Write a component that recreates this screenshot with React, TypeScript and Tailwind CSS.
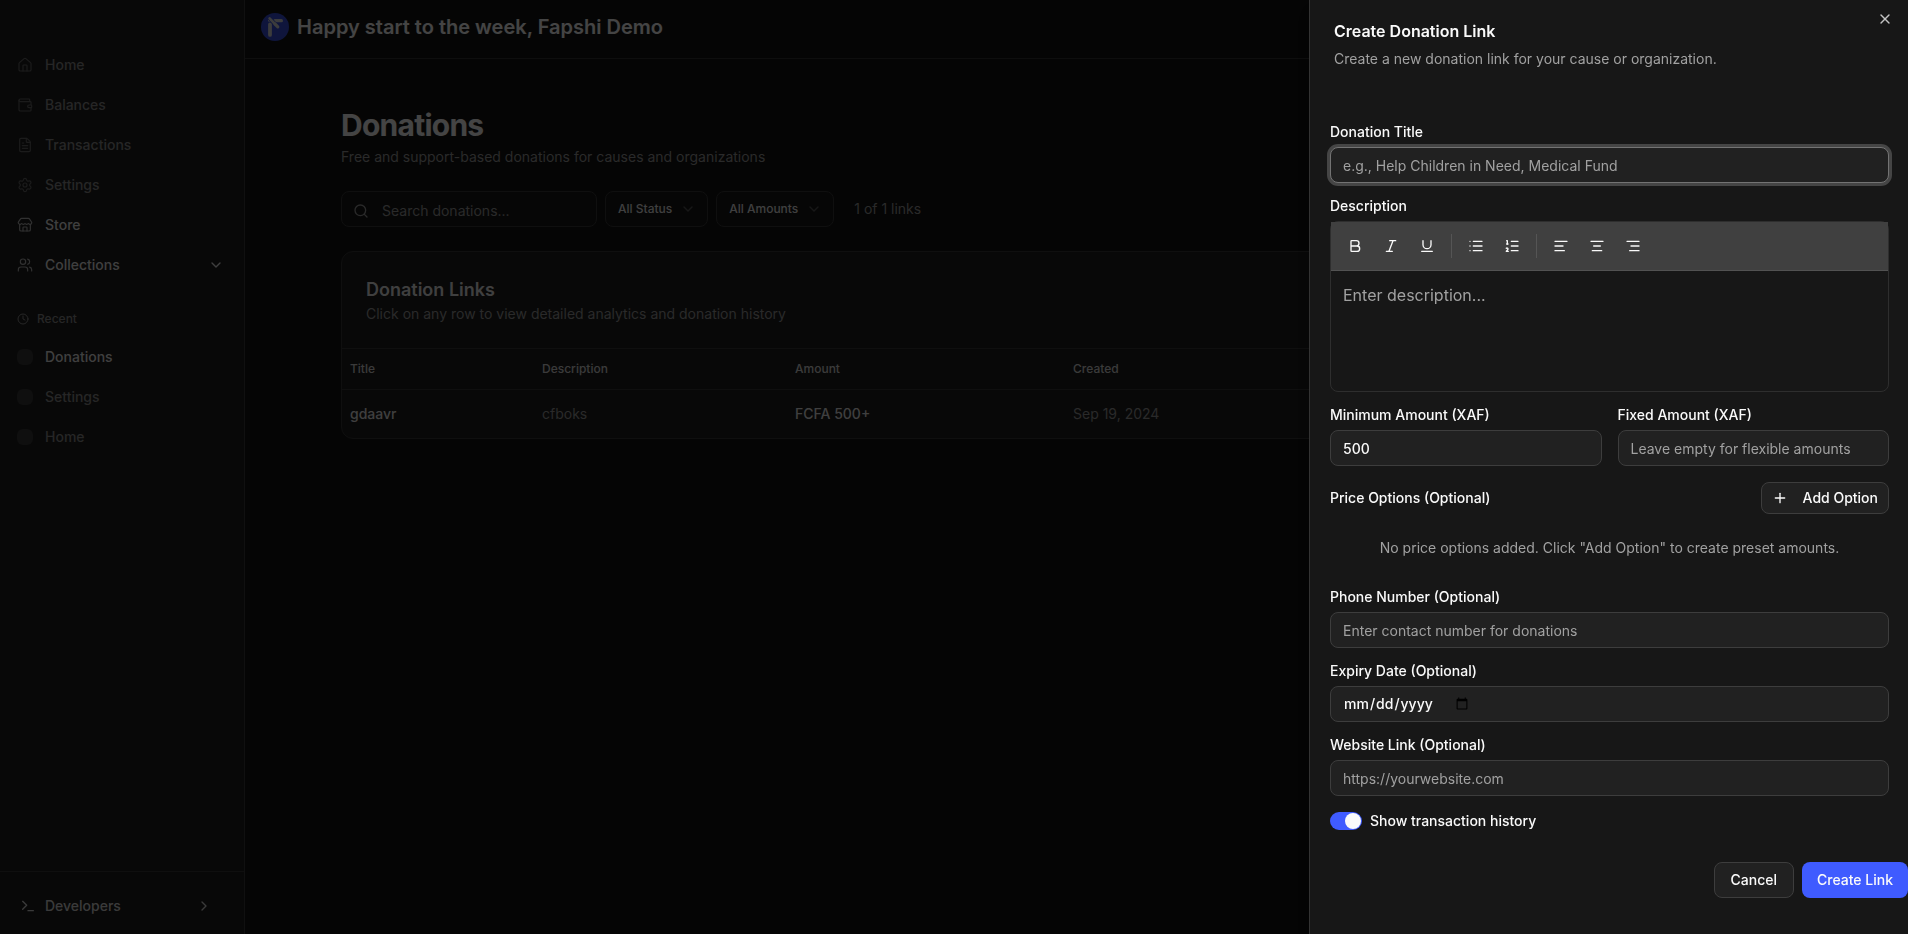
import React from "react";
import {
  AlignCenter, AlignLeft, AlignRight, Bold, ChevronDown, ChevronRight, Clock, FileText, House, Italic,
  List, ListOrdered, Plus, Search, Settings, Store, Terminal, Underline, Users, Wallet, X,
} from "lucide-react";
import type { LucideIcon } from "lucide-react";

type NavItem = { label: string; icon: LucideIcon; strong?: boolean; expandable?: boolean };

const nav: NavItem[] = [
  { label: "Home", icon: House },
  { label: "Balances", icon: Wallet },
  { label: "Transactions", icon: FileText },
  { label: "Settings", icon: Settings },
  { label: "Store", icon: Store, strong: true },
  { label: "Collections", icon: Users, strong: true, expandable: true },
];

const recent = [
  { label: "Donations", strong: true },
  { label: "Settings", strong: false },
  { label: "Home", strong: false },
];

function Logo() {
  return (
    <svg viewBox="0 0 28 28" className="size-7 shrink-0" aria-hidden="true">
      <circle cx="14" cy="14" r="14" fill="#3349c8" />
      <g fill="none" stroke="#c8c8c8" strokeLinecap="round">
        <path d="M9 11.4V21.9" strokeWidth="3.8" />
        <path d="M13.8 7.7H20.4" strokeWidth="3.2" />
        <path d="M8.2 5.2V7.6" strokeWidth="2.4" />
        <path d="M8.6 5.4L16.6 13.6" stroke="#3349c8" strokeWidth="4" />
        <path d="M8.6 5.4L14 11" strokeWidth="2.6" />
        <path d="M14 11L16.8 13.8" strokeWidth="3.2" />
      </g>
    </svg>
  );
}

function Sidebar() {
  return (
    <aside className="flex w-[245px] shrink-0 flex-col border-r border-[#383838] bg-[#1c1c1c] text-sm font-medium">
      <nav className="flex flex-1 flex-col px-2 pt-[45px]">
        {nav.map(({ label, icon: Icon, strong, expandable }) => (
          <a
            key={label}
            href="#"
            className={`flex h-10 items-center gap-3 pl-[9px] pr-3 ${strong ? "text-[#d4d4d4]" : "text-[#808080]"}`}
          >
            <Icon className={`size-4 ${strong ? "text-[#a3a3a3]" : "text-[#5c5c5c]"}`} strokeWidth={1.75} />
            <span className="flex-1">{label}</span>
            {expandable && <ChevronDown className="size-4" />}
          </a>
        ))}
        <h2 className="mt-5 flex h-[28px] items-center gap-2 pl-[9px] text-xs text-[#808080]">
          <Clock className="size-3" />
          Recent
        </h2>
        <div className="mt-1 flex flex-col">
          {recent.map(({ label, strong }) => (
            <a
              key={label}
              href="#"
              className={`flex h-10 items-center gap-3 pl-[9px] ${strong ? "text-[#d4d4d4]" : "text-[#808080]"}`}
            >
              <span className="size-4 rounded-md bg-[#333333]" />
              {label}
            </a>
          ))}
        </div>
      </nav>
      <div className="border-t border-[#333333] px-5 pt-[14px] pb-2">
        <button type="button" className="flex h-10 w-full items-center gap-[9px] pr-3 text-left text-[#c4c4c4]">
          <Terminal className="size-4" />
          <span className="flex-1">Developers</span>
          <ChevronRight className="size-4" />
        </button>
      </div>
    </aside>
  );
}

function FilterButton({ label }: { label: string }) {
  return (
    <button
      type="button"
      className="flex h-9 items-center gap-2 rounded-lg border border-[#333333] bg-[#161616] pr-[11px] pl-3 text-xs font-medium text-[#d4d4d4]"
    >
      {label}
      <ChevronDown className="size-4 opacity-30" />
    </button>
  );
}

function Dashboard() {
  return (
    <main className="min-w-0 flex-1">
      <header className="flex items-center gap-2 border-b border-[#303030] px-4 pt-[13px] pb-[17px]">
        <Logo />
        <p className="text-xl leading-7 font-semibold text-[#e5e5e5]">Happy start to the week, Fapshi Demo</p>
      </header>
      <div className="px-24 pt-12">
        <h1 className="text-3xl leading-9 font-bold tracking-tight text-[#e5e5e5]">Donations</h1>
        <p className="mt-1 text-sm text-[#8c8c8c]">Free and support-based donations for causes and organizations</p>

        <div className="mt-6 flex items-center gap-2">
          <label className="flex h-9 w-64 items-center gap-[13px] rounded-lg border border-[#333333] bg-[#161616] pt-[3px] pl-[11px] text-[#8c8c8c]">
            <Search className="size-4 shrink-0" aria-hidden="true" />
            <input
              type="search"
              aria-label="Search donations"
              placeholder="Search donations..."
              className="w-full min-w-0 bg-transparent text-sm outline-none placeholder:text-[#8c8c8c]"
            />
          </label>
          <FilterButton label="All Status" />
          <FilterButton label="All Amounts" />
          <span className="ml-3 text-sm text-[#8c8c8c]">1 of 1 links</span>
        </div>

        <section className="mt-6 overflow-hidden rounded-xl border border-[#333333] bg-[#1c1c1c]">
          <div className="p-6">
            <h2 className="text-lg leading-7 font-semibold text-[#d4d4d4]">Donation Links</h2>
            <p className="text-sm text-[#8c8c8c]">Click on any row to view detailed analytics and donation history</p>
          </div>
          <table className="w-full table-fixed border-t border-[#333333] text-left text-sm">
            <colgroup>
              <col className="w-[192px]" />
              <col className="w-[253px]" />
              <col className="w-[278px]" />
              <col />
            </colgroup>
            <thead>
              <tr className="h-[41px] border-b border-[#333333] text-xs text-[#c4c4c4]">
                <th className="px-2 font-medium">Title</th>
                <th className="px-2 font-medium">Description</th>
                <th className="px-2 font-medium">Amount</th>
                <th className="px-2 font-medium">Created</th>
              </tr>
            </thead>
            <tbody>
              <tr className="h-12 text-[#8c8c8c]">
                <td className="px-2 font-medium text-[#d4d4d4]">gdaavr</td>
                <td className="px-2">cfboks</td>
                <td className="px-2 font-medium text-[#d4d4d4]">FCFA 500+</td>
                <td className="px-2">Sep 19, 2024</td>
              </tr>
            </tbody>
          </table>
        </section>
      </div>
    </main>
  );
}

const inputClass =
  "flex h-9 w-full min-w-0 rounded-lg border bg-[#212121] px-3 text-sm font-medium text-[#fafafa] outline-none placeholder:font-normal placeholder:text-[#a1a1a1]";

type FieldProps = {
  id: string;
  label: string;
  type?: string;
  placeholder?: string;
  value?: string;
  active?: boolean;
};

function Field({ id, label, type = "text", placeholder, value, active }: FieldProps) {
  return (
    <div className="flex min-w-0 flex-1 flex-col gap-2">
      <label htmlFor={id} className="text-sm leading-[14px] font-medium">
        {label}
      </label>
      <input
        id={id}
        type={type}
        placeholder={placeholder}
        defaultValue={value}
        className={`${inputClass} ${active ? "border-[#737373] ring-[3px] ring-[#454545]" : "border-[#3d3d3d]"}`}
      />
    </div>
  );
}

const toolGroups: { label: string; icon: LucideIcon }[][] = [
  [
    { label: "Bold", icon: Bold },
    { label: "Italic", icon: Italic },
    { label: "Underline", icon: Underline },
  ],
  [
    { label: "Bulleted list", icon: List },
    { label: "Numbered list", icon: ListOrdered },
  ],
  [
    { label: "Align left", icon: AlignLeft },
    { label: "Align center", icon: AlignCenter },
    { label: "Align right", icon: AlignRight },
  ],
];

function Editor() {
  return (
    <div className="flex flex-col gap-2">
      <label htmlFor="description" className="text-sm leading-[14px] font-medium">
        Description
      </label>
      <div className="rounded-lg border border-[#2e2e2e]">
        <div role="toolbar" className="flex h-[49px] items-center gap-1 border-b border-[#525252] bg-[#404040] px-2">
          {toolGroups.map((group, i) => (
            <React.Fragment key={i}>
              {i > 0 && <span className="mx-1 h-6 w-px bg-[#555555]" />}
              {group.map(({ label, icon: Icon }) => (
                <button key={label} type="button" aria-label={label} className="flex size-8 items-center justify-center">
                  <Icon className="size-4" />
                </button>
              ))}
            </React.Fragment>
          ))}
        </div>
        <textarea
          id="description"
          placeholder="Enter description..."
          className="block h-[120px] w-full resize-none bg-transparent px-3 py-3 text-base outline-none placeholder:text-[#a1a1a1]"
        />
      </div>
    </div>
  );
}

function DonationPanel() {
  return (
    <div
      role="dialog"
      aria-labelledby="panel-title"
      className="fixed inset-y-0 right-0 w-[599px] max-w-full overflow-x-hidden overflow-y-auto border-l border-[#333333] bg-[#171717] text-[#fafafa] shadow-lg"
    >
      <button type="button" aria-label="Close" className="absolute top-[11px] right-[15px] text-[#c4c4c4]">
        <X className="size-4" />
      </button>
      <div className="flex flex-col gap-1.5 px-6 pt-[19px]">
        <h2 id="panel-title" className="text-base leading-6 font-semibold">
          Create Donation Link
        </h2>
        <p className="text-sm text-[#a1a1a1]">Create a new donation link for your cause or organization.</p>
      </div>
      <form className="mt-14 flex flex-col gap-4 pr-[19px] pb-9 pl-5">
        <Field id="title" label="Donation Title" placeholder="e.g., Help Children in Need, Medical Fund" active />
        <Editor />
        <div className="flex gap-4">
          <Field id="minimum" label="Minimum Amount (XAF)" value="500" />
          <Field id="fixed" label="Fixed Amount (XAF)" placeholder="Leave empty for flexible amounts" />
        </div>
        <div className="flex flex-col gap-2">
          <div className="flex items-center justify-between">
            <h3 className="text-sm font-medium">Price Options (Optional)</h3>
            <button
              type="button"
              className="flex h-8 items-center gap-[15px] rounded-lg border border-[#3d3d3d] bg-[#212121] px-[10px] text-sm font-medium"
            >
              <Plus className="size-4" />
              Add Option
            </button>
          </div>
          <p className="py-4 text-center text-sm text-[#a1a1a1]">
            No price options added. Click "Add Option" to create preset amounts.
          </p>
        </div>
        <Field id="phone" label="Phone Number (Optional)" type="tel" placeholder="Enter contact number for donations" />
        <Field id="expiry" label="Expiry Date (Optional)" type="date" />
        <Field id="website" label="Website Link (Optional)" type="url" placeholder="https://yourwebsite.com" />
        <label className="flex h-[18px] items-center gap-2 text-sm font-medium">
          <input type="checkbox" role="switch" defaultChecked className="peer sr-only" />
          <span className="flex h-[18px] w-8 items-center justify-end rounded-full bg-[#3f5bff] px-px">
            <span className="size-4 rounded-full bg-[#fafafa]" />
          </span>
          Show transaction history
        </label>
        <div className="-mr-[19px] mt-4 flex justify-end gap-2 text-sm font-medium">
          <button type="button" className="h-9 rounded-lg border border-[#3d3d3d] bg-[#212121] px-4">
            Cancel
          </button>
          <button type="submit" className="h-9 rounded-lg bg-[#3f5bff] px-[15px]">
            Create Link
          </button>
        </div>
      </form>
    </div>
  );
}

export default function App() {
  return (
    <div className="relative flex min-h-screen bg-[#121212] font-['Inter',sans-serif]">
      <Sidebar />
      <Dashboard />
      <div className="absolute inset-0 bg-black/70" />
      <DonationPanel />
    </div>
  );
}
